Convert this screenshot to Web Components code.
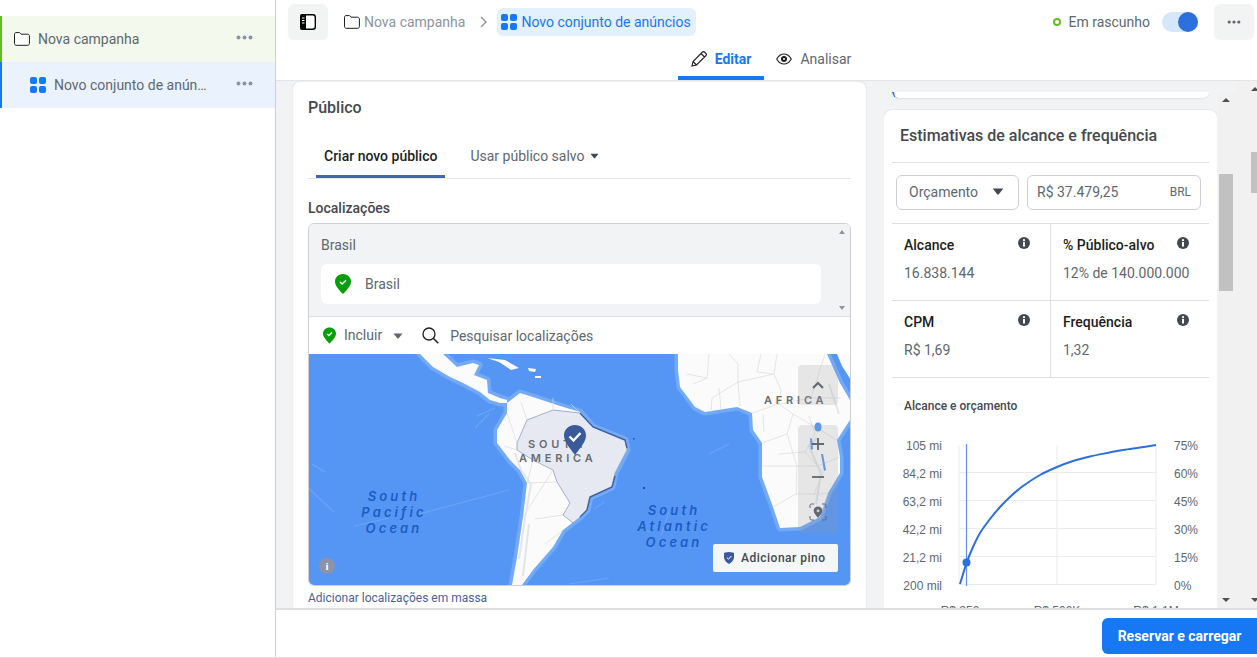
<!DOCTYPE html>
<html lang="pt-BR">
<head>
<meta charset="utf-8">
<title>Nova campanha</title>
<style>
  html, body { margin: 0; height: 100%; overflow: hidden; background: #fff; }
  body { font-family: Roboto, "Liberation Sans", sans-serif; color: #606770; }
</style>
</head>
<body>
<ad-editor></ad-editor>

<script>
// small shared icons, all inline svg
const ICONS = {
  folder: '<svg width="16" height="14" viewBox="0 0 16 14"><path d="M.5 2.2C.5 1.3 1.2.6 2 .6h3.2c.5 0 .8.2 1.1.6l.7 1h6.7c.9 0 1.7.8 1.7 1.7v7.6c0 1-.8 1.8-1.7 1.8H2.2c-1 0-1.7-.8-1.7-1.8z" fill="#fff" stroke="#1c1e21" stroke-width="1"/></svg>',
  grid: '<svg width="16" height="16" viewBox="0 0 16 16" fill="#1877f2"><rect width="7" height="7" rx="2"/><rect x="9" width="7" height="7" rx="2"/><rect y="9" width="7" height="7" rx="2"/><rect x="9" y="9" width="7" height="7" rx="2"/></svg>',
  dots: '<svg width="17" height="5" viewBox="0 0 17 5" fill="#8d949e"><circle cx="2.5" cy="2.5" r="2"/><circle cx="8.5" cy="2.5" r="2"/><circle cx="14.5" cy="2.5" r="2"/></svg>',
  pin: '<svg width="16" height="20" viewBox="0 0 16 20"><path d="M8 0c4.4 0 8 3.2 8 7.4 0 4.6-4.6 8.8-8 12.6C4.6 16.2 0 12 0 7.4 0 3.2 3.6 0 8 0z" fill="#0a9d0a"/><path d="M5 8l2.2 2L11 6.3" fill="none" stroke="#fff" stroke-width="1.6"/></svg>',
  info: '<svg width="12" height="12" viewBox="0 0 12 12"><circle cx="6" cy="6" r="6" fill="#444950"/><rect x="5" y="5" width="2" height="4.5" fill="#fff"/><circle cx="6" cy="3.2" r="1.1" fill="#fff"/></svg>',
  caret: '<svg width="10" height="6" viewBox="0 0 10 6"><path d="M.5.5h9L5.7 5.3a1 1 0 0 1-1.400 0z" fill="#606770"/></svg>'
};

class AdEditor extends HTMLElement {
  constructor() {
    super();
    this.attachShadow({ mode: 'open' });
    this.shadowRoot.innerHTML = `
      <style>
        :host { display: flex; height: 658px; box-sizing: border-box; border-bottom: 1px solid #dddfe2; }
        .main { flex: 1; min-width: 0; display: flex; flex-direction: column; }
        .body { flex: 1; min-height: 0; display: flex; background: #f2f3f4; }
        .center { width: 575px; margin-left: 16px; overflow: hidden; }
        .right { width: 333px; margin-left: 17px; padding-top: 11px; overflow: hidden; }
        .remnant { height: 6px; margin: 0 8px 12px; background: #fff; border-radius: 0 0 8px 8px; position: relative; overflow: hidden; box-shadow: 0 1px 2px rgba(0,0,0,.08); }
        .remnant::before { content: ""; position: absolute; left: 0; top: -6px; width: 12px; height: 12px; border-radius: 6px; border-left: 2px solid #1877f2; box-sizing: border-box; }
        .bar { width: 18px; margin: 11px 0 0 1px; background: #f1f1f1; position: relative; }
        .bar i, .outer i { position: absolute; display: block; background: #c1c1c1; }
        .bar i { left: 1px; width: 14px; top: 82px; height: 117px; }
        .arrow-up, .arrow-down { position: absolute; width: 0; height: 0; border-left: 4px solid transparent; border-right: 4px solid transparent; }
        .arrow-up { border-bottom: 4px solid #505050; top: 6px; left: 4px; }
        .arrow-down { border-top: 4px solid #505050; bottom: 6px; left: 4px; }
        .outer { flex: 1; background: #f1f1f1; position: relative; overflow: hidden; }
        .outer i { left: 15px; width: 16px; top: 71px; height: 41px; }
        .outer .arrow-up { left: 15px; top: 6px; }
        .outer .arrow-down { left: 15px; bottom: 6px; }
      </style>
      <ad-sidebar></ad-sidebar>
      <div class="main">
        <ad-header></ad-header>
        <div class="body">
          <div class="center"><ad-audience></ad-audience></div>
          <div class="right">
            <div class="remnant"></div>
            <ad-estimates></ad-estimates>
          </div>
          <div class="bar"><span class="arrow-up"></span><i></i><span class="arrow-down"></span></div>
          <div class="outer"><span class="arrow-up"></span><i></i><span class="arrow-down"></span></div>
        </div>
        <ad-footer></ad-footer>
      </div>
    `;
  }
}

class AdSidebar extends HTMLElement {
  constructor() {
    super();
    this.attachShadow({ mode: 'open' });
    this.shadowRoot.innerHTML = `
      <style>
        :host { display: block; width: 275px; flex: none; padding-top: 16px; border-right: 1px solid #ccd0d5; font-size: 14px; }
        .row { height: 46px; display: flex; align-items: center; gap: 8px; box-sizing: border-box; padding-right: 22px; }
        .camp { background: #f3f9ec; border-left: 2px solid #63be21; padding-left: 12px; }
        .set { background: #eaf3fd; border-left: 2px solid #1877f2; padding-left: 28px; }
        .label { flex: 1; min-width: 0; white-space: nowrap; }
        .dots { display: flex; margin-top: -3px; }
        svg { flex: none; }
      </style>
      <div class="row camp">${ICONS.folder}<span class="label">Nova campanha</span><span class="dots">${ICONS.dots}</span></div>
      <div class="row set">${ICONS.grid}<span class="label">Novo conjunto de anún…</span><span class="dots">${ICONS.dots}</span></div>
    `;
  }
}

class AdHeader extends HTMLElement {
  constructor() {
    super();
    this.attachShadow({ mode: 'open' });
    this.shadowRoot.innerHTML = `
      <style>
        :host { display: block; height: 81px; box-sizing: border-box; border-bottom: 1px solid #e4e5e7; background: #fff; font-size: 14px; position: relative; }
        .top { height: 44px; display: flex; align-items: center; padding: 0 3px 0 12px; }
        .square { width: 40px; height: 36px; background: #f2f3f3; border-radius: 6px; display: flex; align-items: center; justify-content: center; flex: none; }
        .crumb { display: flex; align-items: center; gap: 4px; color: #8d949e; margin-left: 16px; }
        .chev { margin: 0 10px 0 15px; }
        .pill { height: 28px; display: flex; align-items: center; gap: 4px; padding: 0 5px 0 4px; border-radius: 6px; background: #e3f0fe; color: #1877f2; }
        .status { margin-left: auto; display: flex; align-items: center; }
        .led { width: 4px; height: 4px; border: 2px solid #63be21; border-radius: 50%; margin-right: 8px; }
        .switch { width: 36px; height: 20px; margin: 0 16px 0 12px; border-radius: 10px; background: #d6e6fb; position: relative; }
        .switch::after { content: ""; position: absolute; right: 0; top: 0; width: 20px; height: 20px; border-radius: 50%; background: #2c6fdd; }
        .tabs { display: flex; justify-content: center; height: 36px; margin-left: 8px; }
        .tab { display: flex; align-items: center; gap: 8px; height: 30px; padding: 0 13px 2px; border-bottom: 4px solid transparent; }
        .tab.on { color: #1877f2; font-weight: 700; border-color: #1877f2; }
        .tab + .tab { padding: 0 12px 2px; }
      </style>
      <div class="top">
        <div class="square">
          <svg width="16" height="16" viewBox="0 0 16 16"><rect x=".7" y=".7" width="14.6" height="14.6" rx="2.5" fill="#fff" stroke="#050505" stroke-width="1.4"/><path d="M2 0h4v16H2a2 2 0 0 1-2-2V2a2 2 0 0 1 2-2z" fill="#050505"/><path d="M2 4h2.5M2 6.5h2.5M2 9h2.5" stroke="#fff"/></svg>
        </div>
        <div class="crumb">${ICONS.folder}<span>Nova campanha</span></div>
        <svg class="chev" width="7" height="12" viewBox="0 0 7 12"><path d="M1 1l5 5-5 5" fill="none" stroke="#8d949e" stroke-width="1.4"/></svg>
        <div class="pill">${ICONS.grid}<span>Novo conjunto de anúncios</span></div>
        <div class="status">
          <span class="led"></span><span>Em rascunho</span><span class="switch"></span>
          <div class="square">${ICONS.dots.replace(/#8d949e/, '#606770').replace('width="17" height="5"', 'width="14" height="4"')}</div>
        </div>
      </div>
      <div class="tabs">
        <div class="tab on">
          <svg width="16" height="16" viewBox="0 0 16 16"><path d="M1 15l1-4.500L11.500 1a1.500 1.500 0 0 1 2 0l1.500 1.500a1.500 1.500 0 0 1 0 2L5.500 14zM2 10.500L5.500 14M10 2.500L13.500 6" fill="none" stroke="#1c1e21" stroke-width="1.1"/></svg>
          <span>Editar</span>
        </div>
        <div class="tab">
          <svg width="16" height="12" viewBox="0 0 16 12"><path d="M.7 6C2.500 2.800 5 1 8 1s5.500 1.800 7.300 5C13.500 9.200 11 11 8 11S2.500 9.200.7 6z" fill="none" stroke="#1c1e21" stroke-width="1.1"/><circle cx="8" cy="6" r="3" fill="#1c1e21"/><circle cx="8" cy="6" r="1" fill="#fff"/></svg>
          <span>Analisar</span>
        </div>
      </div>
    `;
  }
}

class AdAudience extends HTMLElement {
  constructor() {
    super();
    this.attachShadow({ mode: 'open' });
    this.shadowRoot.innerHTML = `
      <style>
        :host { display: block; background: #fff; border-radius: 8px; box-shadow: inset 0 0 2px rgba(0,0,0,.25); padding: 0 16px; font-size: 14px; height: 560px; }
        h2 { margin: 0; height: 52px; display: flex; align-items: center; font-size: 16px; font-weight: 500; color: #444950; }
        .tabs { margin-top: 1px; height: 44px; display: flex; border-bottom: 1px solid #e4e5e7; padding-left: 8px; }
        .tab { height: 44px; box-sizing: border-box; padding: 0 8px; margin-bottom: -1px; display: flex; align-items: center; gap: 5px; }
        .tab.on { font-weight: 500; color: #1c1e21; border-bottom: 3px solid #4267b2; padding-top: 3px; }
        .tab + .tab { margin-left: 17px; height: 44px; }
        h3 { margin: 0; height: 44px; display: flex; align-items: center; font-size: 14px; font-weight: 500; color: #444950; box-sizing: border-box; padding-top: 14px; }
        .box { border: 1px solid #ccd0d5; border-radius: 6px; overflow: hidden; }
        .chosen { height: 93px; background: #f2f3f4; padding: 0 29px 0 12px; box-sizing: border-box; position: relative; border-bottom: 1px solid #dddfe2; }
        .country { height: 40px; box-sizing: border-box; padding-top: 2px; display: flex; align-items: center; }
        .item { height: 40px; box-sizing: border-box; padding: 0 0 1px 14px; border-radius: 6px; background: #fff; display: flex; align-items: center; gap: 14px; }
        .up, .down { position: absolute; right: 5px; width: 0; height: 0; border-left: 3.5px solid transparent; border-right: 3.5px solid transparent; }
        .up { top: 6px; border-bottom: 4px solid #8d949e; }
        .down { bottom: 6px; border-top: 4px solid #8d949e; }
        .search { height: 37px; display: flex; align-items: center; padding-left: 14px; background: #fff; }
        .search .inc { margin-left: 8px; margin-top: -2px; }
        .search .caret { margin: 0 0 0 11px; display: flex; }
        .search .glass { margin-left: 19px; display: flex; }
        .search .ph { margin-left: 11px; }
        .link { margin-top: 5px; font-size: 12px; color: #4b5f92; line-height: 14px; }
      </style>
      <h2>Público</h2>
      <div class="tabs">
        <div class="tab on">Criar novo público</div>
        <div class="tab">Usar público salvo ${ICONS.caret.replace('width="10"', 'width="9"').replace('#606770', '#444950')}</div>
      </div>
      <h3>Localizações</h3>
      <div class="box">
        <div class="chosen">
          <span class="up"></span>
          <div class="country">Brasil</div>
          <div class="item">${ICONS.pin}<span>Brasil</span></div>
          <span class="down"></span>
        </div>
        <div class="search">
          ${ICONS.pin.replace('width="16" height="20"', 'width="13" height="17"')}
          <span class="inc">Incluir</span>
          <span class="caret">${ICONS.caret}</span>
          <span class="glass"><svg width="17" height="17" viewBox="0 0 17 17"><circle cx="7" cy="7" r="6" fill="none" stroke="#1c1e21" stroke-width="1.3"/><path d="M11.500 11.500L16.300 16.300" stroke="#1c1e21" stroke-width="1.5"/></svg></span>
          <span class="ph">Pesquisar localizações</span>
        </div>
        <ad-map></ad-map>
      </div>
      <div class="link">Adicionar localizações em massa</div>
    `;
  }
}

const SOUTH_AMERICA = 'M111 0L124 13 141 23 154 29 171 38 181 46 191 49 198 49 211 39 224 43 248 51 271 58 284 73 316 86 318 96 306 119 303 133 281 143 278 156 271 163 254 176 244 193 224 216 213 231H203L208 203 214 163 218 129 211 116 201 106 188 89 188 76 198 59 198 46 191 44 179 39 178 26 165 21 170 11 164 9 148 13 134 0z';
const AFRICA = 'M369 0V16L371 33 386 53 396 58 428 53 443 59 444 76 453 89 453 123 464 153 471 174 491 173 511 163 519 139 531 119 531 103 528 86 541 66 541 46 531 29 518 0z';

class AdMap extends HTMLElement {
  constructor() {
    super();
    this.attachShadow({ mode: 'open' });
    this.shadowRoot.innerHTML = `
      <style>
        :host { display: block; height: 231px; position: relative; background: #5596f4; overflow: hidden; }
        svg.map { display: block; }
        .label-ocean { font: italic 600 13px Inter, Roboto, sans-serif; letter-spacing: 3.1px; fill: #1c5cc4; text-anchor: middle; }
        .label-land { font: 600 11px Inter, Roboto, sans-serif; letter-spacing: 3.8px; fill: #686c73; }
        .group { position: absolute; left: 489px; width: 40px; background: rgba(150,152,156,.2); border-radius: 4px; display: flex; flex-direction: column; align-items: center; }
        .g1 { top: 11px; height: 40px; justify-content: center; }
        .g2 { top: 71px; height: 108px; justify-content: space-around; }
        .pinbtn { position: absolute; left: 404px; top: 190px; width: 125px; height: 28px; box-sizing: border-box; background: #f5f6f7; border-radius: 2px; display: flex; align-items: center; gap: 7px; padding-left: 11px; font-size: 12px; font-weight: 500; letter-spacing: .5px; color: #444950; }
        .i { position: absolute; left: 10px; top: 204px; width: 16px; height: 16px; border-radius: 50%; background: #8b94a8; color: #fff; font: 700 11px/16px "Liberation Serif", serif; text-align: center; }
        .place { position: absolute; left: 255px; top: 71px; }
      </style>
      <svg class="map" width="542" height="231" viewBox="0 0 542 231">
        <g fill="none" stroke="#72aaf6" stroke-width="7" stroke-linejoin="round">
          <path d="${SOUTH_AMERICA}"/>
          <path d="${AFRICA}"/>
        </g>
        <g fill="none" stroke="#6aa5f6" stroke-width="1.2">
          <path d="M3 110L16 118M-5 130L25 158M45 172L80 164M110 160L200 136M168 62L186 54M166 74L180 60"/>
          <path d="M285 155L295 148M330 170L340 178M352 182L360 158M400 100L420 90M220 215L235 212M260 230L300 224"/>
        </g>
        <path d="M178 4l18 2 14 8-8 2-12-8zM219 14l8 1-1 3-6-1zM226 22l6 0 0 2-6 0z" fill="#fbfbfb"/>
        <g fill="#fbfbfb">
          <path d="${SOUTH_AMERICA}"/>
          <path d="${AFRICA}"/>
          <path d="M528 0H542V26L533 12z"/>
        </g>
        <path d="M218 66L244 56 271 59 284 73 316 86 318 96 306 119 303 133 281 143 278 156 271 163 264 169 254 161 261 149 248 128 244 116 224 106 208 96 208 89z" fill="#e6e9f2" stroke="#8f9dbd" stroke-width=".8"/>
        <path d="M271 59L284 73 316 86 318 94M306 122L303 133 281 143 278 156 271 163" fill="none" stroke="#3f5f9f" stroke-width="1.4"/>
        <path d="M324 84h1.500v1.500H324zM334 133h2v2h-2z" fill="#2e4d8e"/>
        <g fill="none" stroke="#dadbde" stroke-width=".7">
          <path d="M198 59L208 89M208 96L195 92M218 129L248 128M224 106L218 129M244 116L214 163M254 161L226 165M236 190L254 176"/>
          <path d="M218 66L212 48M244 56L244 44M271 59L262 50"/>
          <path d="M400 0L398 24 384 30M420 0L429 10 429 28 403 44 402 58M468 0L465 20 472 36 470 50 502 44M429 28L465 20M443 59L470 50 484 60 478 80 453 89M478 80L488 112 453 112M488 112L509 112 531 103M488 112L487 140 464 153M487 140L511 140 519 139M484 60L528 86M502 44L532 44M516 0L502 44M452 0L448 18 465 20M378 20L398 24M410 34L412 55M429 28L431 52M454 60L455 78"/>
          <path d="M500 62L506 80 496 98 514 118 505 140M470 100L496 98M512 160L519 139"/>
        </g>
        <g fill="none" stroke="#e4e5e7" stroke-width="2" stroke-linejoin="round">
          <path d="M206 99L212 116 222 130 216 165 210 205"/>
          <path d="M508 84L500 92 512 120 507 150"/>
          <path d="M214 222L220 170"/>
          <path d="M520 30L530 60"/>
        </g>
        <ellipse cx="509" cy="73" rx="3.5" ry="4.500" fill="#5596f4"/>
        <path d="M501 84l2 1 1 10-2 1zM512 100l2 0 3 16-2 1z" fill="#5596f4"/>
        <text class="label-land" x="219" y="94">SOUTH</text>
        <text class="label-land" x="210" y="108">AMERICA</text>
        <text class="label-land" x="455" y="50">AFRICA</text>
        <text class="label-ocean" x="85" y="147">South</text>
        <text class="label-ocean" x="85" y="163">Pacific</text>
        <text class="label-ocean" x="85" y="179">Ocean</text>
        <text class="label-ocean" x="365" y="161">South</text>
        <text class="label-ocean" x="365" y="177">Atlantic</text>
        <text class="label-ocean" x="365" y="193">Ocean</text>
      </svg>
      <svg class="place" width="22" height="30" viewBox="0 0 22 30"><path d="M11 0c6 0 11 4.500 11 10.500C22 17 16 23 11 30 6 23 0 17 0 10.500 0 4.500 5 0 11 0z" fill="#3b5a9a"/><path d="M5.500 11.500L9.500 15.500 16.500 8" fill="none" stroke="#fff" stroke-width="2.4"/></svg>
      <div class="group g1"><svg width="12" height="8" viewBox="0 0 12 8"><path d="M1 7l5-5 5 5" fill="none" stroke="#606770" stroke-width="2"/></svg></div>
      <div class="group g2">
        <svg width="14" height="14" viewBox="0 0 14 14"><path d="M7 1v12M1 7h12" stroke="#606770" stroke-width="1.8"/></svg>
        <svg width="14" height="4" viewBox="0 0 14 4"><path d="M1 2h12" stroke="#606770" stroke-width="1.8"/></svg>
        <svg width="18" height="18" viewBox="0 0 18 18"><path d="M1 5V2.500A1.500 1.500 0 0 1 2.500 1H5M13 1h2.500A1.500 1.500 0 0 1 17 2.500V5M17 13v2.500a1.500 1.500 0 0 1-1.500 1.500H13M5 17H2.500A1.500 1.500 0 0 1 1 15.500V13" fill="none" stroke="#606770"/><path d="M9 3.500c2.500 0 4.300 1.800 4.300 4.200 0 2.400-2.300 4.600-4.300 7.300-2-2.700-4.300-4.900-4.300-7.300C4.700 5.300 6.500 3.500 9 3.500z" fill="#606770"/><circle cx="9" cy="7.700" r="1.5" fill="#c9cbcf"/></svg>
      </div>
      <div class="pinbtn">
        <svg width="10" height="12" viewBox="0 0 10 12"><path d="M5 0c3 0 5 1 5 1v4.500C10 8 7.500 10.500 5 12 2.500 10.500 0 8 0 5.500V1s2-1 5-1z" fill="#3b5a9a"/><path d="M2.800 5.500L4.500 7.200 7.400 4" fill="none" stroke="#fff"/></svg>
        <span>Adicionar pino</span>
      </div>
      <div class="i">i</div>
    `;
  }
}

// reach curve, read off the chart; smoothed into a catmull-rom path
const CURVE = [[960,584],[966.7,562.7],[973,547],[980,533],[990,519],[1000,507],[1011,496],[1023,486],[1040,475],[1057,467],[1073,461],[1090,456.5],[1107,453],[1123,450],[1140,447.5],[1156,445]];

function curvePath(pts) {
  let d = `M${pts[0][0]} ${pts[0][1]}`;
  for (let i = 0; i < pts.length - 1; i++) {
    const a = pts[i - 1] || pts[i], b = pts[i], c = pts[i + 1], e = pts[i + 2] || c;
    d += `C${b[0] + (c[0] - a[0]) / 6} ${b[1] + (c[1] - a[1]) / 6} ${c[0] - (e[0] - b[0]) / 6} ${c[1] - (e[1] - b[1]) / 6} ${c[0]} ${c[1]}`;
  }
  return d;
}

class AdEstimates extends HTMLElement {
  constructor() {
    super();
    this.attachShadow({ mode: 'open' });
    const stat = (label, value) => `
      <div class="stat">
        <div class="lab"><span>${label}</span>${ICONS.info}</div>
        <div class="val">${value}</div>
      </div>`;
    this.shadowRoot.innerHTML = `
      <style>
        :host { display: block; background: #fff; border-radius: 8px; box-shadow: 0 0 2px rgba(0,0,0,.15); padding: 0 8px; font-size: 14px; height: 540px; }
        h2 { margin: 0; height: 50px; padding: 0 8px 2px; display: flex; align-items: center; font-size: 16px; font-weight: 500; color: #444950; border-bottom: 1px solid #dddfe2; }
        .controls { height: 61px; display: flex; gap: 8px; padding: 12px 8px 0 4px; box-sizing: border-box; border-bottom: 1px solid #dddfe2; }
        .field { height: 35px; box-sizing: border-box; border: 1px solid #ccd0d5; border-radius: 6px; display: flex; align-items: center; justify-content: space-between; }
        .sel { width: 123px; padding: 0 14px 2px 12px; }
        .num { flex: 1; padding: 0 9px 1px; }
        .num small { font-size: 12px; }
        .grid { display: grid; grid-template-columns: 159px 158px; }
        .stat { height: 77px; box-sizing: border-box; padding: 11px 20px 0 12px; border-bottom: 1px solid #dddfe2; }
        .stat:nth-child(odd) { border-right: 1px solid #dddfe2; }
        .lab { display: flex; justify-content: space-between; color: #1c1e21; font-weight: 500; line-height: 20px; }
        .lab svg { margin-top: 2px; }
        .val { margin-top: 8px; line-height: 20px; color: #606770; white-space: nowrap; }
        .head { margin: 21px 0 0 12px; font-size: 12px; font-weight: 500; line-height: 14px; color: #444950; }
        svg.chart { display: block; margin-top: 7px; }
        .ax { font: 12px "Liberation Sans", sans-serif; fill: #606770; }
      </style>
      <h2>Estimativas de alcance e frequência</h2>
      <div class="controls">
        <div class="field sel"><span>Orçamento</span>${ICONS.caret.replace('width="10" height="6"', 'width="12" height="7"').replace('#606770', '#444950')}</div>
        <div class="field num"><span>R$ 37.479,25</span><small>BRL</small></div>
      </div>
      <div class="grid">
        ${stat('Alcance', '16.838.144')}
        ${stat('% Público-alvo', '12% de 140.000.000')}
        ${stat('CPM', 'R$ 1,69')}
        ${stat('Frequência', '1,32')}
      </div>
      <div class="head">Alcance e orçamento</div>
      <svg class="chart" width="317" height="190" viewBox="892 420 317 190">
        <g stroke="#e9ebee" fill="none">
          <path d="M959 445V584M1057 445V584M1156 445V584M959 472.5H1156M959 500.5H1156M959 528.5H1156M959 556.5H1156M959 584.5H1156"/>
        </g>
        <path d="M966.5 444V586" stroke="#5a93ec" stroke-width="1.2"/>
        <path d="${curvePath(CURVE)}" fill="none" stroke="#2d6fdb" stroke-width="2"/>
        <circle cx="966.5" cy="562.5" r="4" fill="#2d6fdb"/>
        <g class="ax" text-anchor="end">
          <text x="942" y="450">105 mi</text><text x="942" y="478">84,2 mi</text><text x="942" y="506">63,2 mi</text>
          <text x="942" y="534">42,2 mi</text><text x="942" y="562">21,2 mi</text><text x="942" y="590">200 mil</text>
        </g>
        <g class="ax">
          <text x="1174" y="450">75%</text><text x="1174" y="478">60%</text><text x="1174" y="506">45%</text>
          <text x="1174" y="534">30%</text><text x="1174" y="562">15%</text><text x="1174" y="590">0%</text>
        </g>
        <g class="ax" text-anchor="middle">
          <text x="960" y="615">R$ 250</text><text x="1057" y="615">R$ 500K</text><text x="1156" y="615">R$ 1,1M</text>
        </g>
      </svg>
    `;
  }
}

class AdFooter extends HTMLElement {
  constructor() {
    super();
    this.attachShadow({ mode: 'open' });
    this.shadowRoot.innerHTML = `
      <style>
        :host { display: flex; justify-content: flex-end; align-items: center; height: 49px; flex: none; box-sizing: border-box; background: #fff; border-top: 2px solid #dddfe2; position: relative; }
        button { all: unset; width: 155px; height: 36px; margin-top: 5px; background: #1877f2; color: #fff; border-radius: 6px 0 0 6px; font: 700 14px/36px Roboto, sans-serif; text-align: center; }
      </style>
      <button type="button">Reservar e carregar</button>
    `;
  }
}

customElements.define('ad-editor', AdEditor);
customElements.define('ad-sidebar', AdSidebar);
customElements.define('ad-header', AdHeader);
customElements.define('ad-audience', AdAudience);
customElements.define('ad-map', AdMap);
customElements.define('ad-estimates', AdEstimates);
customElements.define('ad-footer', AdFooter);
</script>
</body>
</html>
